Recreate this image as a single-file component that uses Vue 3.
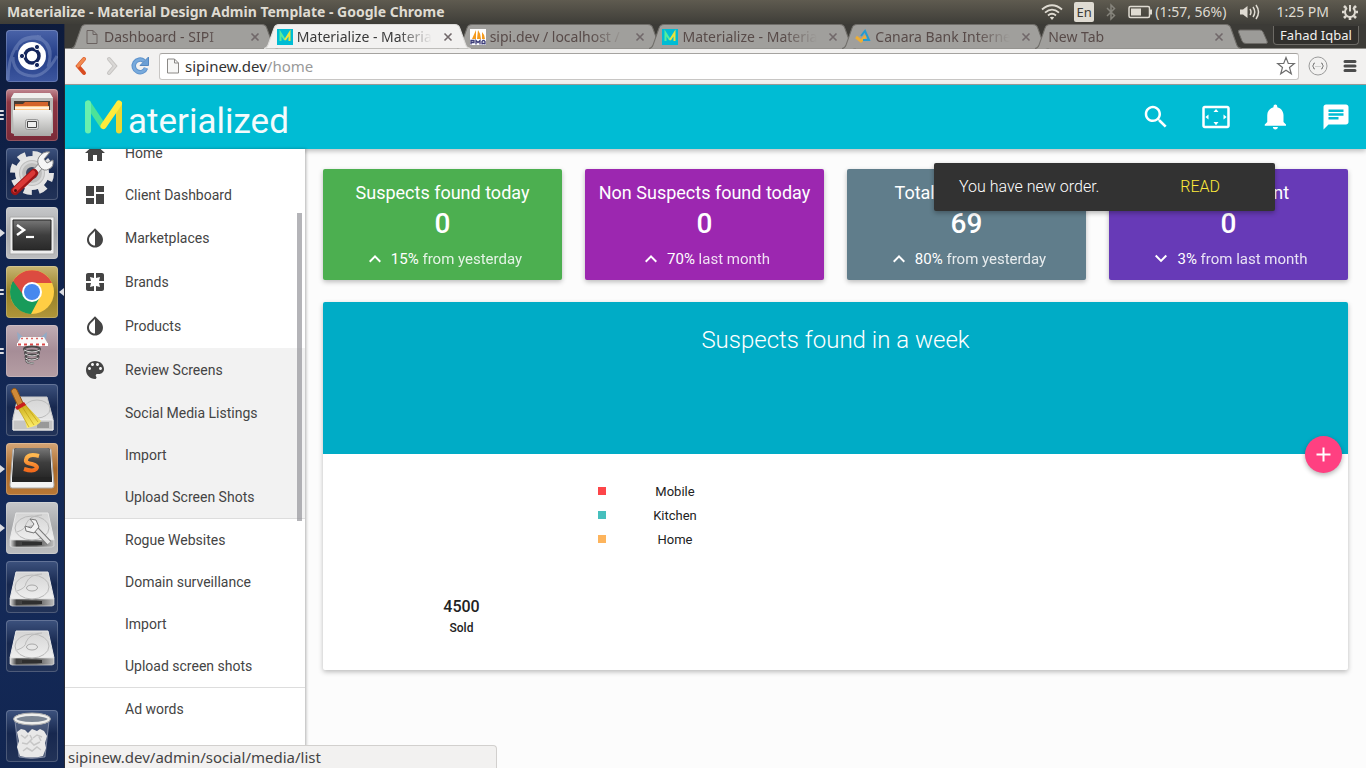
<script setup>
const tabs = [
  { title: 'Dashboard - SIPI', icon: 'page' },
  { title: 'Materialize - Material', icon: 'm', active: true },
  { title: 'sipi.dev / localhost / s', icon: 'pma' },
  { title: 'Materialize - Material', icon: 'm' },
  { title: 'Canara Bank Internet', icon: 'bank' },
  { title: 'New Tab' }
]

const paths = {
  home: 'M10 20v-6h4v6h5v-8h3L12 3 2 12h3v8z',
  dashboard: 'M3 13h8V3H3v10zm0 8h8v-6H3v6zm10 0h8V11h-8v10zm0-18v6h8V3h-8z',
  invert: 'M17.66 7.93L12 2.27 6.34 7.93c-3.12 3.12-3.12 8.19 0 11.31C7.9 20.8 9.95 21.58 12 21.58c2.05 0 4.1-.78 5.66-2.34 3.12-3.12 3.12-8.19 0-11.31zM12 19.59c-1.6 0-3.11-.62-4.24-1.76C6.62 16.69 6 15.19 6 13.59s.62-3.11 1.76-4.24L12 5.1v14.49z',
  pages: 'M3 5v6h5L7 7l4 1V3H5c-1.1 0-2 .9-2 2zm5 8H3v6c0 1.1.9 2 2 2h6v-5l-4 1 1-4zm9 4l-4-1v5h6c1.1 0 2-.9 2-2v-6h-5l1 4zm2-14h-6v5l4-1-1 4h5V5c0-1.1-.9-2-2-2z',
  palette: 'M12 3c-4.97 0-9 4.03-9 9s4.03 9 9 9c.83 0 1.5-.67 1.5-1.5 0-.39-.15-.74-.39-1.01-.23-.26-.38-.61-.38-.99 0-.83.67-1.5 1.5-1.5H16c2.76 0 5-2.24 5-5 0-4.42-4.03-8-9-8zm-5.5 9c-.83 0-1.5-.67-1.5-1.5S5.67 9 6.5 9 8 9.67 8 10.5 7.33 12 6.5 12zm3-4C8.67 8 8 7.33 8 6.5S8.67 5 9.5 5s1.5.67 1.5 1.5S10.33 8 9.5 8zm5 0c-.83 0-1.5-.67-1.5-1.5S13.67 5 14.5 5s1.5.67 1.5 1.5S15.33 8 14.5 8zm3 4c-.83 0-1.5-.67-1.5-1.5S16.67 9 17.5 9s1.5.67 1.5 1.5-.67 1.5-1.5 1.5z',
  search: 'M15.5 14h-.79l-.28-.27C15.41 12.59 16 11.11 16 9.5 16 5.91 13.09 3 9.5 3S3 5.91 3 9.5 5.91 16 9.5 16c1.61 0 3.09-.59 4.23-1.57l.27.28v.79l5 4.99L20.49 19l-4.99-5zm-6 0C7.01 14 5 11.99 5 9.5S7.01 5 9.5 5 14 7.01 14 9.5 11.99 14 9.5 14z',
  overscan: 'M12.01 5.5L10 8h4l-1.99-2.5zM18 10v4l2.5-1.99L18 10zM6 10l-2.5 2.01L6 14v-4zm8 6h-4l2.01 2.5L14 16zm7-13H3c-1.1 0-2 .9-2 2v14c0 1.1.9 2 2 2h18c1.1 0 2-.9 2-2V5c0-1.1-.9-2-2-2zm0 16.01H3V4.99h18v14.02z',
  bell: 'M11.5 22c1.1 0 2-.9 2-2h-4c0 1.1.9 2 2 2zm6.5-6v-5.5c0-3.07-2.13-5.64-5-6.32V3.5c0-.83-.67-1.5-1.5-1.5S10 2.67 10 3.5v.68c-2.87.68-5 3.25-5 6.32V16l-2 2v1h17v-1l-2-2z',
  chat: 'M20 2H4c-1.1 0-1.99.9-1.99 2L2 22l4-4h14c1.1 0 2-.9 2-2V4c0-1.1-.9-2-2-2zM6 9h12v2H6V9zm8 5H6v-2h8v2zm4-6H6V6h12v2z',
  up: 'M7.41 15.41L12 10.83l4.59 4.58L18 14l-6-6-6 6z',
  down: 'M7.41 7.84L12 12.42l4.59-4.58L18 9.25l-6 6-6-6z'
}

const actions = [
  { icon: 'search', label: 'Search' },
  { icon: 'overscan', label: 'Full screen' },
  { icon: 'bell', label: 'Notifications' },
  { icon: 'chat', label: 'Chat' }
]

const menu = [
  { text: 'Home', icon: 'home' },
  { text: 'Client Dashboard', icon: 'dashboard' },
  { text: 'Marketplaces', icon: 'invert', group: true },
  { text: 'Brands', icon: 'pages', group: true },
  { text: 'Products', icon: 'invert', group: true },
  { text: 'Review Screens', icon: 'palette', group: true, open: true },
  { text: 'Social Media Listings', open: true },
  { text: 'Import', open: true },
  { text: 'Upload Screen Shots', open: true },
  { text: 'Rogue Websites', divided: true },
  { text: 'Domain surveillance' },
  { text: 'Import' },
  { text: 'Upload screen shots' },
  { text: 'Ad words', divided: true },
  { text: 'Import' }
]

const cards = [
  { title: 'Suspects found today', value: '0', dir: 'up', pct: '15%', note: 'from yesterday', color: 'green' },
  { title: 'Non Suspects found today', value: '0', dir: 'up', pct: '70%', note: 'last month', color: 'purple' },
  { title: 'Total marketplace', value: '69', dir: 'up', pct: '80%', note: 'from yesterday', color: 'slate' },
  { title: 'Notices in print', value: '0', dir: 'down', pct: '3%', note: 'from last month', color: 'violet' }
]

const legend = [
  { name: 'Mobile', tone: 'red' },
  { name: 'Kitchen', tone: 'teal' },
  { name: 'Home', tone: 'orange' }
]

const apps = [
  { id: 'dash', label: 'Search your computer' },
  { id: 'files', label: 'Files', run: 3 },
  { id: 'settings', label: 'System Settings' },
  { id: 'terminal', label: 'Terminal', run: 1 },
  { id: 'chrome', label: 'Google Chrome', run: 2, focus: true },
  { id: 'spring', label: 'Mail spring', run: 2 },
  { id: 'cleaner', label: 'Disk cleaner' },
  { id: 'sublime', label: 'Sublime Text', run: 1 },
  { id: 'disks', label: 'Disks', run: 1 },
  { id: 'drive', label: 'Volume 1' },
  { id: 'drive', label: 'Volume 2' },
  { id: 'trash', label: 'Trash' }
]
</script>

<template>
  <div class="desktop">
    <header class="panel">
      <span class="panel-title">Materialize - Material Design Admin Template - Google Chrome</span>
      <div class="tray">
        <svg width="22" height="18" viewBox="0 0 22 18" fill="none" stroke="#dfdbd2" stroke-width="1.8">
          <path d="M1 6.5Q11-2 21 6.5M4 9.700Q11 3.500 18 9.700M7 12.500Q11 9 15 12.500" /><path d="M8.800 14.300 11 17l2.200-2.700Q11 13 8.800 14.300z" fill="#dfdbd2" stroke="none" />
        </svg>
        <span class="lang">En</span>
        <svg class="bt" width="10" height="18" viewBox="0 0 10 18" fill="none" stroke="#86847c" stroke-width="1.500"><path d="M1 5l7.500 7.500L5 16V2l3.500 3.500L1 13" /></svg>
        <span class="battery">
          <svg width="25" height="14" viewBox="0 0 25 14"><rect x="1" y="1.500" width="20.500" height="11" rx="1.500" fill="none" stroke="#dfdbd2" stroke-width="1.500" /><path d="M3 3.500h10v7H3zM22 4.500h2v5h-2z" fill="#dfdbd2" /></svg>
          (1:57, 56%)
        </span>
        <svg class="vol" width="21" height="16" viewBox="0 0 21 16" fill="none" stroke="#dfdbd2" stroke-width="1.500"><path d="M1 5.500h3L8.500 2v12L4 10.500H1z" fill="#dfdbd2" stroke="none" /><path d="M11 5q2 3 0 6M14 3q3.500 5 0 10M17 1q5 7 0 14" /></svg>
        <span class="clock">1:25 PM</span>
        <svg width="18" height="18" viewBox="0 0 18 18" fill="none" stroke="#dfdbd2"><path d="M6 5a5 5 0 1 0 6 0M9 2v6.500" stroke-width="2" /><path d="M1 9h2.500M14.500 9H17M3 3l2.200 2.200M15 3l-2.200 2.200M3 15l2.200-2.200M15 15l-2.200-2.200M9 14v3" stroke-width="2.600" /></svg>
      </div>
    </header>

    <nav class="launcher" aria-label="Launcher">
      <svg class="defs" width="0" height="0" aria-hidden="true">
        <defs>
          <linearGradient id="metal" x1="0" y1="0" x2="0" y2="1"><stop offset="0" stop-color="#f4f4f3" /><stop offset="1" stop-color="#a9a9a7" /></linearGradient>
          <linearGradient id="plate" x1="0" y1="0" x2="0" y2="1"><stop offset="0" stop-color="#d4d4d4" /><stop offset="1" stop-color="#efefef" /></linearGradient>
          <linearGradient id="edge" x1="0" y1="0" x2="1" y2="0"><stop offset="0" stop-color="#e4e4e4" /><stop offset=".15" stop-color="#3d3d3d" /><stop offset=".6" stop-color="#555" /><stop offset="1" stop-color="#bdbdbd" /></linearGradient>
          <linearGradient id="dark" x1="0" y1="0" x2="0" y2="1"><stop offset="0" stop-color="#777" /><stop offset=".5" stop-color="#3e3e3e" /><stop offset="1" stop-color="#292929" /></linearGradient>
          <linearGradient id="orange" x1="0" y1="0" x2="0" y2="1"><stop offset="0" stop-color="#ffb950" /><stop offset="1" stop-color="#f26b1c" /></linearGradient>
          <linearGradient id="straw" x1="0" y1="0" x2="0" y2="1"><stop offset="0" stop-color="#c8aa18" /><stop offset="1" stop-color="#fff06c" /></linearGradient>
        </defs>
      </svg>
      <button v-for="(app, i) in apps" :key="i" class="app" :class="app.id" :aria-label="app.label">
        <span v-if="app.run" class="pips" :class="'run' + app.run"><i v-for="n in app.run" :key="n"></i></span>
        <span v-if="app.focus" class="focus"></span>
        <svg width="52" height="52" viewBox="0 0 52 52">
          <g v-if="app.id === 'dash'">
            <g fill="none" stroke="#9db0d8" stroke-opacity=".35" stroke-width="3"><path d="M2 50Q3 8 28 8q18 2 16 20M7 27q0 18 20 19 13 0 24-20M31 6q18 10 11 31M10 20Q13 5 35 7" /></g>
            <circle cx="26" cy="26" r="14" fill="#fff" /><circle cx="26" cy="26" r="7" fill="none" stroke="#14265c" stroke-width="3.500" />
            <g stroke="#fff" stroke-width="1.500"><path d="M18 26h-2M30 19l1-2M30 33l1 2" /></g>
            <g fill="#14265c" stroke="#fff"><circle cx="16" cy="26" r="2.600" /><circle cx="31" cy="17" r="2.600" /><circle cx="31" cy="35" r="2.600" /></g>
          </g>
          <g v-else-if="app.id === 'files'">
            <path d="M8 4h36l3 5v35l-3 1H8l-3-1V9z" fill="#b8b8b5" /><path d="M8 4h36l3 5H5z" fill="#f0f0ee" /><path d="M8 12h36v14H8z" fill="#463b32" /><path d="M9 15h8l2-2h23v3l1 8H9z" fill="#d4642b" /><path d="M9 17h34v4H9z" fill="#ffcc8b" /><path d="M9 18h34v2H9z" fill="#fff0dc" /><path d="M7 21h38l1 4-1 22H8L7 25z" fill="url(#metal)" />
            <rect x="19.500" y="30.500" width="13" height="10" rx="2" fill="#ddd" stroke="#999" /><path d="M21.500 32.500h9v6h-9z" fill="#eee" stroke="#444" />
          </g>
          <g v-else-if="app.id === 'settings'">
            <circle cx="26" cy="25" r="17" fill="#e6e6e6" /><circle cx="26" cy="25" r="19" fill="none" stroke="#e3e3e3" stroke-width="6" stroke-dasharray="8 6.920" /><circle cx="26" cy="25" r="13" fill="#bebebd" /><circle cx="26" cy="25" r="11" fill="none" stroke="#d8d8d8" stroke-width="2" /><circle cx="26" cy="25" r="6" fill="#3d4660" />
            <path d="M26 28 36 16" stroke="#999" stroke-width="7" /><path d="M26 28 36 16" stroke="#ededed" stroke-width="5" /><path d="M34 19q-4-5-1-10 4-6 11-5l-6 7 3 4 6-3q1 7-4 9-5 3-9-2z" fill="#f6f6f6" stroke="#888" /><path d="M9 43 28 25" stroke="#9e1617" stroke-width="8" stroke-linecap="round" /><path d="M9 42 27 25" stroke="#db3937" stroke-width="5" stroke-linecap="round" /><circle cx="9.500" cy="42.500" r="1.500" fill="#4d1010" />
          </g>
          <g v-else-if="app.id === 'terminal'">
            <path d="M4 10h44v37H4z" fill="#eee" stroke="#aaa" /><path d="M7 13h38v30H7z" fill="url(#dark)" stroke="#222" /><path d="M11 18l7 5-7 5" fill="none" stroke="#fff" stroke-width="2.500" /><path d="M20 30h8" stroke="#fff" stroke-width="2.200" />
          </g>
          <g v-else-if="app.id === 'chrome'">
            <circle cx="26" cy="26" r="22" fill="#ffce44" /><path d="M6 17A22 22 0 0 1 46 17H26L16 29z" fill="#dc4b40" /><path d="M7 15A22 22 0 0 0 25 48l9-17-16-1z" fill="#189b5a" /><circle cx="26" cy="26" r="10" fill="#fff" /><circle cx="26" cy="26" r="8" fill="#4688ee" />
          </g>
          <g v-else-if="app.id === 'spring'">
            <path d="M11 7l6 5h18l6-5-1 8H12z" fill="#93aac5" /><path d="M15 12h23l4 7H11z" fill="#f8f8f7" /><path d="M15 13.500h23" stroke="#d66" stroke-width="1.500" stroke-dasharray="2 3" /><path d="M11 18h31v3H11z" fill="#fff" /><path d="M12 19.500h29" stroke="#d84848" stroke-width="2" stroke-dasharray="3 3" />
            <g fill="none" stroke="#484848" stroke-width="2"><ellipse cx="26" cy="24" rx="8" ry="2.500" /><ellipse cx="26" cy="28" rx="7" ry="2.500" /><ellipse cx="26" cy="32" rx="6.500" ry="2.500" /><path d="M20 34q0 5 8 4" /></g><g fill="none" stroke="#ddd"><path d="M18 25q8 4 16 0M19 29q7 4 14 0M19.500 33q6 4 13 0M20 35q1 4 8 3" /></g>
          </g>
          <g v-else-if="app.id === 'cleaner'">
            <path d="M12 13h29l6 22v11H7V34z" fill="url(#plate)" stroke="#ccc" /><ellipse cx="31" cy="25" rx="13" ry="9" fill="none" stroke="#bbb" /><path d="M7 36h40v10H7z" fill="#c5c5c5" stroke="#eee" /><path d="M32 38v6m2-6v6m2-6v6m2-6v6m2-6v6m2-6v6" stroke="#555" stroke-width=".8" />
            <path d="M5 7q3-5 6-1l6 13-5 3z" fill="#d08a38" stroke="#8e5416" /><path d="m10 23 8-4 17 18q-2 5-14 7-2-12-11-21z" fill="url(#straw)" /><path d="m12 24 11 19m-8-22 13 20m-10-22 14 19" stroke="#bd9a15" stroke-width=".7" /><path d="m9 23 9-5 2 3-9 5z" fill="#c91e1e" />
          </g>
          <g v-else-if="app.id === 'disks' || app.id === 'drive'">
            <path d="M10 11h32l6 27H4z" fill="url(#plate)" stroke="#e9e9e9" /><path d="M4 38h44v6l-2 1H6l-2-1z" fill="url(#edge)" stroke="#ddd" stroke-width=".7" />
            <ellipse cx="26" cy="26" rx="17" ry="12" fill="none" stroke="#b9b9b9" /><path d="M11 30q9-3 9-8 4-9 16-9" fill="none" stroke="#bbb" /><ellipse cx="26" cy="27" rx="5.500" ry="3" fill="#e6e6e6" stroke="#a8a8a8" /><path d="M16 40h20v3H16z" fill="#2f2f2f" />
            <g v-if="app.id === 'disks'"><path d="M27 24 43 41" stroke="#777" stroke-width="6" /><path d="M27 24 43 41" stroke="#e4e4e4" stroke-width="4" /><path d="m24 17 6 1 3 7-5 6-8-2-1-5 6 2 3-4z" fill="#f2f2f2" stroke="#777" /></g>
          </g>
          <g v-else-if="app.id === 'sublime'">
            <path d="M7 6h38l3 36q0 3-2 3H6q-2 0-2-3z" fill="#f3f3f3" stroke="#aaa" /><path d="M8 7q0-2 3-2h30q3 0 3 2l2 28v4H6v-4z" fill="#242424" /><path d="M8 8q0-3 3-3h30q3 0 3 3l1 26H7z" fill="url(#dark)" /><path d="M33 13q-12-3-13 4-1 3 6 4 7 2 4 5-3 3-12 0" fill="none" stroke="url(#orange)" stroke-width="4" />
          </g>
          <g v-else-if="app.id === 'trash'">
            <path d="m9 11 4 36q12 3 26 0l4-36" fill="#c3cad8" fill-opacity=".25" stroke="#c5cada" stroke-opacity=".5" /><path d="m11 22 4-3 4 1 3 3 4-4 5 2 3-2 4 2 3 5-2 7 1 5-3 8q-11 3-23 0l-3-9 2-6z" fill="#e8e8e8" /><path d="m15 25 4 3 3-3m5 3 4-3 5 2M16 33l5 1 3-3 4 4 6-3M17 41l4-3 5 3 5-4 4 3M24 25l2 4-3 3m10-5 2 4" fill="none" stroke="#c6c6c6" stroke-width="1.500" /><ellipse cx="26" cy="9" rx="17" ry="4.500" fill="#7c8694" stroke="#eeeeec" stroke-width="3" /><ellipse cx="26" cy="9" rx="18.500" ry="6" fill="none" stroke="#aaa" />
          </g>
        </svg>
      </button>
    </nav>

    <section class="browser">
      <div class="strip">
        <div class="tabs">
          <div v-for="(tab, i) in tabs" :key="i" class="tab-slot" :class="{ active: tab.active }">
            <div class="tab">
              <svg class="tab-shape" viewBox="0 0 206 25" preserveAspectRatio="none">
                <path d="M0 24.500Q3 24 4 21L10 4Q11 .5 15 .5H190Q194 .5 195 4L201 21Q202 24 206 24.500" />
              </svg>
              <svg v-if="tab.icon === 'page'" class="fav" width="16" height="16" viewBox="0 0 16 16"><path d="M3 1.500h6l4 4v9H3zM9 1.500v4h4" fill="none" stroke="#6a6260" /></svg>
              <svg v-else-if="tab.icon === 'm'" class="fav" width="16" height="16" viewBox="0 0 16 16"><path d="M0 0h16v16H0z" fill="#00bcd4" /><path d="M3.500 12V4L8 11" fill="none" stroke="#55ed9d" stroke-width="2" /><path d="m8 11 4.500-7v8" fill="none" stroke="#eae33c" stroke-width="2" /></svg>
              <svg v-else-if="tab.icon === 'pma'" class="fav" width="16" height="16" viewBox="0 0 16 16"><path d="M0 0h16v16H0z" fill="#fff" /><path d="M2 10 6 1v9zM7 10l1-9q3 4 3 9zM12 10V3q3 3 3 7z" fill="#f59b1e" /><path d="M1 15.500v-4h3v2H1M6 15.500v-4l2 2 2-2v4m2 0v-3l1-1h1l1 1v3m-3-1h3" fill="none" stroke="#3b3c78" stroke-width="1.300" /></svg>
              <svg v-else-if="tab.icon === 'bank'" class="fav" width="16" height="16" viewBox="0 0 16 16"><path d="m1 8 5 4 5-5" fill="none" stroke="#edae35" stroke-width="3" /><path d="m6 7 4-5 4 9H8" fill="none" stroke="#249bd2" stroke-width="2" /></svg>
              <a class="tab-title" href="#">{{ tab.title }}</a>
              <button class="close" aria-label="Close tab"><svg width="10" height="10" viewBox="0 0 10 10"><path d="m1.500 1.500 7 7m0-7-7 7" fill="none" stroke="currentColor" stroke-width="1.600" /></svg></button>
            </div>
          </div>
        </div>
        <button class="new-tab" aria-label="New tab"><svg width="32" height="16" viewBox="0 0 32 16"><path d="M1.500 3Q1 1 3 1H23Q25 1 26 3L30 12Q31 14.500 29 14.500H9Q6 14.500 5 12Z" fill="#9c9b98" stroke="#6d6b67" /></svg></button>
        <button class="profile">Fahad Iqbal</button>
      </div>

      <div class="toolbar">
        <button class="tool" aria-label="Back"><svg width="12" height="20" viewBox="0 0 12 20"><path d="m9 3-6 7 6 7" fill="none" stroke="#d84c20" stroke-width="4" stroke-linecap="round" /><path d="m9 3-6 7" stroke="#f08b50" stroke-width="3" stroke-linecap="round" /></svg></button>
        <button class="tool forward" aria-label="Forward"><svg width="12" height="20" viewBox="0 0 12 20"><path d="m3 3 6 7-6 7" fill="none" stroke="#c5c3c1" stroke-width="4" stroke-linecap="round" /><path d="m3 3 6 7-6 7" fill="none" stroke="#dad8d6" stroke-width="2" stroke-linecap="round" /></svg></button>
        <button class="tool reload" aria-label="Reload"><svg width="20" height="20" viewBox="0 0 20 20"><path d="M14 5a6.300 6.300 0 1 0 2 7" fill="none" stroke="#5e93cc" stroke-width="4.500" /><path d="M14 5a6.300 6.300 0 1 0 2 7" fill="none" stroke="#78aadc" stroke-width="2.500" /><path d="M18.500 1v8.500H10z" fill="#6b9fd5" stroke="#5588c0" /></svg></button>
        <div class="address">
          <svg width="14" height="16" viewBox="0 0 14 16"><path d="M1.500 1h7l4 4v10h-11z" fill="#f7f7f6" stroke="#8b8986" /><path d="M8.500 1v4h4" fill="none" stroke="#8b8986" /></svg>
          <a class="url" href="#">sipinew.dev<span>/home</span></a>
          <button class="tool" aria-label="Bookmark this page"><svg width="20" height="20" viewBox="0 0 20 20"><path d="m10 1.500 2.300 6h6L13.500 11.500l1.800 6.300L10 14.200l-5.300 3.600 1.800-6.300L1.700 7.500h6z" fill="#fff" stroke="#6e6e6e" stroke-width="1.200" /></svg></button>
        </div>
        <button class="tool ext" aria-label="Extension"><svg width="20" height="20" viewBox="0 0 20 20" fill="none"><circle cx="10" cy="10" r="9" stroke="#9b9b9b" /><path d="M7 7q-2 0-1.500 2L4.500 10l1 1Q5 13 7 13M13 7q2 0 1.500 2l1 1-1 1q.5 2-1.500 2" stroke="#777" /><path d="M7.500 10.500h5" stroke="#aaa" stroke-dasharray="1 1" /></svg></button>
        <button class="tool" aria-label="Menu"><svg width="14" height="14" viewBox="0 0 14 14"><path d="M2 2.500h10M2 7h10M2 11.500h10" stroke="#4c4c4c" stroke-width="3" stroke-linecap="round" /></svg></button>
      </div>

      <div class="page">
        <header class="appbar">
          <a class="brand" href="#" aria-label="Materialized">
            <svg width="37" height="34" viewBox="0 0 37 34" fill="none" stroke-width="6" stroke-linecap="round"><path d="M3 3.500 18 26" stroke="#4be398" /><path d="M3 3.500v27" stroke="#69f0ae" /><path d="M34 4v26.500" stroke="#ecd832" /><path d="M18.500 26 34 3.500" stroke="#ffeb3b" /></svg>
            <span>aterialized</span>
          </a>
          <div class="actions">
            <button v-for="a in actions" :key="a.icon" :aria-label="a.label"><svg width="30" height="30" viewBox="0 0 24 24" fill="#fff"><path :d="paths[a.icon]" /></svg></button>
          </div>
        </header>

        <div class="body">
          <aside class="side">
            <ul>
              <li v-for="(m, i) in menu" :key="i" :class="{ group: m.group, open: m.open, divided: m.divided }">
                <a href="#"><span class="side-icon"><svg v-if="m.icon" width="24" height="24" viewBox="0 0 24 24" fill="#444"><path :d="paths[m.icon]" /></svg></span>{{ m.text }}</a>
              </li>
            </ul>
            <span class="scrollbar"></span>
          </aside>

          <main class="content">
            <div class="cards">
              <article v-for="c in cards" :key="c.title" class="card" :class="c.color">
                <p class="card-title">{{ c.title }}</p>
                <h4>{{ c.value }}</h4>
                <p class="compare"><svg width="24" height="24" viewBox="0 0 24 24" fill="#fff"><path :d="paths[c.dir]" /></svg><span>{{ c.pct }} <em>{{ c.note }}</em></span></p>
              </article>
            </div>

            <section class="chart">
              <div class="chart-head">
                <h5>Suspects found in a week</h5>
                <button class="fab" aria-label="Add"><svg width="23" height="23" viewBox="0 0 23 23"><path d="M11.500 4.500v14M4.500 11.500h14" stroke="#fff" stroke-width="2" /></svg></button>
              </div>
              <div class="chart-body">
                <div class="sold"><strong>4500</strong><span>Sold</span></div>
                <ul class="legend">
                  <li v-for="l in legend" :key="l.name"><i :class="l.tone"></i><span>{{ l.name }}</span></li>
                </ul>
              </div>
            </section>
          </main>
        </div>

        <div class="toast" role="status"><span>You have new order.</span><a href="#">READ</a></div>
        <div class="status">sipinew.dev/admin/social/media/list</div>
      </div>
    </section>
  </div>
</template>

<style>
body { overflow: hidden; }
</style>

<style scoped>
.desktop { display: grid; grid-template: 24px minmax(0, 1fr) / 65px minmax(0, 1fr); height: 100vh; font-family: "Noto Sans", sans-serif; color: #3c3c3c; }
.desktop * { box-sizing: border-box; }
svg { display: block; flex: none; }
button { border: 0; padding: 0; background: none; font: inherit; color: inherit; cursor: pointer; }
a { color: inherit; text-decoration: none; }
ul { list-style: none; margin: 0; padding: 0; }
p, h4, h5 { margin: 0; }

.panel { grid-column: 1 / -1; display: flex; justify-content: space-between; align-items: center; padding: 0 7px 1px; background: linear-gradient(#5f5b50, #3e3d38); color: #dfdbd2; }
.panel-title { font-size: 14px; font-weight: 700; white-space: nowrap; }
.tray { display: flex; align-items: center; font-size: 14px; white-space: nowrap; }
.lang { margin: 0 12px 0 11px; width: 20px; height: 20px; border-radius: 2px; background: #dfdbd2; color: #3c3b37; font-size: 13px; line-height: 20px; text-align: center; }
.bt { margin-right: 12px; }
.battery { display: flex; align-items: center; gap: 2px; }
.vol { margin: 0 16px 0 13px; }
.clock { margin-right: 12px; }

.launcher { position: relative; display: flex; flex-direction: column; align-items: center; gap: 7px; padding: 6px 1px 6px 0; border-right: 1px solid #2b2d38; background: radial-gradient(circle at 20% 70%, #152b5a, #10234d 60%, #0d1b3c); }
.defs { position: absolute; }
.app { position: relative; width: 52px; height: 52px; border-radius: 4px; background: linear-gradient(#3d527e, #17284f 45%, #223358); box-shadow: inset 0 0 0 1px rgba(255, 255, 255, .2); flex: none; }
.app:last-child { margin-top: auto; }
.dash { background: linear-gradient(#4a63a8, #243e87 50%, #3d57a0); }
.files { background: linear-gradient(#c18a93, #8e3643 25%, #7a2a38); }
.terminal, .disks { background: linear-gradient(#c7c8ca, #a7a8aa 50%, #bcbdbf); }
.chrome { background: linear-gradient(#c9b672, #968027 50%, #b0963a); }
.spring { background: linear-gradient(#c0adb5, #a68d97 50%, #b59ea4); }
.sublime { background: linear-gradient(#d5a677, #a9692b 50%, #b97835); }
.pips { position: absolute; left: -6px; top: 20px; height: 12px; display: flex; flex-direction: column; justify-content: center; gap: 2px; }
.pips i { width: 4px; height: 2px; background: #dcdde2; border-radius: 0 1px 1px 0; }
.run1 i { width: 0; height: 0; border: solid transparent; border-width: 4px 0 4px 5px; border-left-color: #dcdde2; background: none; }
.focus { position: absolute; right: -6px; top: 22px; border: solid transparent; border-width: 4px 5px 4px 0; border-right-color: #dcdde2; }

.browser { display: flex; flex-direction: column; min-width: 0; min-height: 0; }
.strip { display: flex; align-items: flex-start; height: 25px; padding: 0 7px 0 6px; background: #3c3b37; border-bottom: 1px solid #8a8985; flex: none; }
.tabs { flex: 1; display: grid; grid-template-columns: repeat(6, minmax(0, 1fr)); }
.tab-slot { min-width: 0; }
.tab-slot.active { position: relative; z-index: 1; }
.tab { position: relative; display: flex; align-items: center; width: calc(100% + 14px); height: 25px; padding: 0 18px 0 13px; font-size: 14px; color: #584b49; }
.tab-shape { position: absolute; left: 0; top: 0; width: 100%; height: 25px; fill: #a09f9c; stroke: #706e6a; }
.active .tab-shape { fill: #f2f1f0; stroke: #dedddb; }
.active .tab { color: #3a3a3a; }
.fav { position: relative; margin-right: 4px; }
.tab-title { position: relative; flex: 1; min-width: 0; overflow: hidden; white-space: nowrap; mask-image: linear-gradient(90deg, #000 75%, transparent); }
.close { position: relative; margin-left: 11px; color: #71686a; }
.new-tab { margin: 5px 4px 0 9px; }
.profile { width: 86px; height: 19px; margin-top: 2px; border: 1px solid #6c6a65; border-top: 0; border-radius: 0 0 4px 4px; background: #302f2c; color: #f2f1f0; font-size: 13px; line-height: 17px; white-space: nowrap; }

.toolbar { display: flex; align-items: center; height: 36px; padding: 0 9px 1px 10px; background: #f2f1f0; border-bottom: 1px solid #a09f9d; flex: none; }
.tool { flex: none; }
.tool.forward { margin-left: 19px; }
.tool.reload { margin: 0 9px 0 12px; }
.address { flex: 1; display: flex; align-items: center; height: 27px; padding: 0 2px 0 6px; background: #fff; border: 1px solid #c8c6c4; border-top-color: #a5a3a0; border-radius: 3px; }
.url { flex: 1; margin-left: 5px; font-size: 15px; color: #333; }
.url span { color: #999; }
.tool.ext { margin: 0 15px 0 9px; }

.page { position: relative; flex: 1; display: flex; flex-direction: column; min-height: 0; background: #fcfcfc; font-family: Roboto, sans-serif; }
.appbar { position: relative; z-index: 1; display: flex; justify-content: space-between; align-items: center; height: 64px; padding-left: 20px; background: #00bcd4; box-shadow: 0 2px 5px rgba(0, 0, 0, .26); flex: none; }
.brand { display: flex; align-items: center; gap: 6px; color: #f4fbfc; font-size: 35px; line-height: 36px; }
.brand span { padding-top: 9px; }
.actions { display: flex; }
.actions button { display: flex; justify-content: center; width: 60px; }
.body { flex: 1; display: flex; min-height: 0; }

.side { position: relative; z-index: 2; width: 240px; flex: none; overflow: hidden; background: #fff; box-shadow: 1px 0 3px rgba(0, 0, 0, .3); }
.side ul { margin-top: -17px; }
.side a { display: flex; align-items: center; height: 42px; padding-left: 18px; font-size: 14px; color: #444; }
.side .group a { height: 44px; }
.side .open { background: #f2f2f2; }
.side .divided { border-top: 1px solid #ddd; }
.side-icon { width: 42px; }
.scrollbar { position: absolute; right: 3px; top: 64px; width: 5px; height: 308px; background: rgba(140, 140, 146, .65); }

.content { flex: 1; min-width: 0; padding: 20px 18px; }
.cards { display: grid; grid-template-columns: repeat(4, minmax(0, 1fr)); gap: 23px; }
.card { padding: 10px 0 9px; border-radius: 2px; color: #fff; text-align: center; box-shadow: 0 2px 5px rgba(0, 0, 0, .26); }
.card-title { font-size: 18px; line-height: 28px; white-space: nowrap; }
.card h4 { font-size: 28px; font-weight: 500; line-height: 34px; }
.compare { display: flex; justify-content: center; align-items: center; gap: 4px; margin-top: 6px; font-size: 15px; line-height: 24px; }
.compare em { font-style: normal; opacity: .85; }
.green { background: #4caf50; }
.purple { background: #9c27b0; }
.slate { background: #607d8b; }
.violet { background: #673ab7; }

.chart { margin-top: 22px; background: #fff; border-radius: 2px; box-shadow: 0 2px 5px rgba(0, 0, 0, .26); }
.chart-head { position: relative; height: 152px; padding-top: 22px; background: #00acc6; border-radius: 2px 2px 0 0; color: #fff; text-align: center; }
.chart-head h5 { font-size: 24px; font-weight: 300; line-height: 32px; }
.fab { position: absolute; right: 6px; bottom: -19px; display: grid; place-items: center; width: 37px; height: 37px; border-radius: 50%; background: #ff4081; box-shadow: 0 2px 5px rgba(0, 0, 0, .3); }
.chart-body { display: grid; grid-template-columns: 275fr 750fr; height: 216px; padding-top: 25px; color: #222; }
.sold { align-self: end; display: flex; flex-direction: column; align-items: center; padding: 0 0 32px 2px; }
.sold strong { font-size: 16px; font-weight: 500; line-height: 22px; }
.sold span { font-size: 12px; font-weight: 500; line-height: 20px; }
.legend li { display: flex; align-items: center; height: 24px; font-size: 13px; }
.legend i { width: 8px; height: 8px; }
.legend span { width: 138px; text-align: center; }
.red { background: #fd4549; }
.teal { background: #46bfbd; }
.orange { background: #fdb45c; }

.toast { position: absolute; z-index: 3; right: 91px; top: 78px; display: flex; align-items: center; width: 341px; height: 48px; padding: 0 55px 2px 25px; justify-content: space-between; border-radius: 2px; background: #323232; color: #fff; font-size: 16px; font-weight: 300; box-shadow: 0 2px 5px rgba(0, 0, 0, .3); }
.toast a { color: #ffeb3b; }
.status { position: absolute; z-index: 4; left: 0; bottom: 0; width: 432px; height: 23px; padding-left: 3px; border: solid #d2d0ce; border-width: 1px 1px 0 0; border-radius: 0 4px 0 0; background: #f2f1f0; color: #444; font: 15px/22px "Noto Sans", sans-serif; }
</style>
